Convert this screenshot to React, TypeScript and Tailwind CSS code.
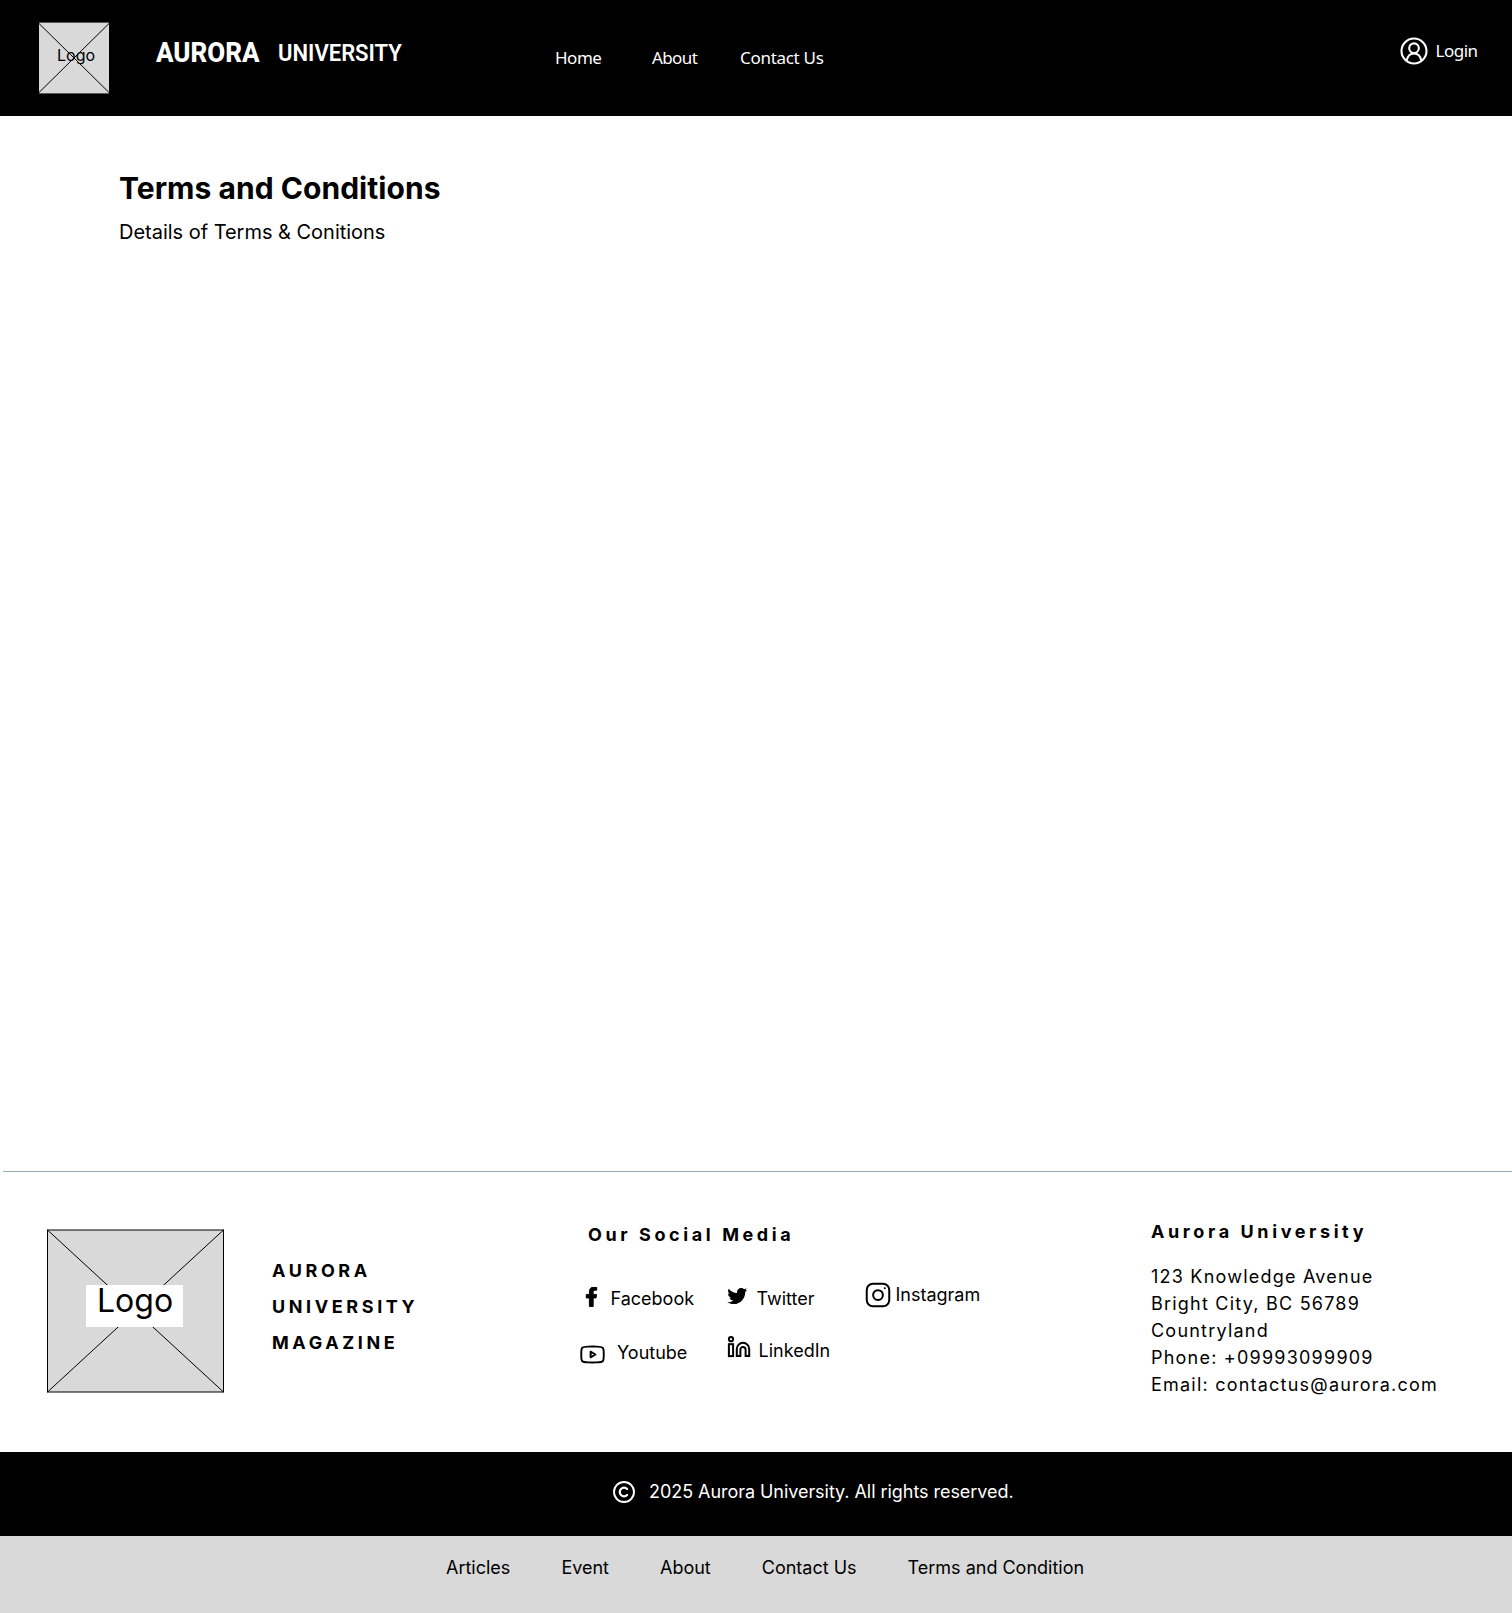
import type { ReactNode } from "react";
import { FaFacebookF, FaTwitter } from "react-icons/fa";

function UserIcon() {
  return (
    <svg className="h-7 w-7" viewBox="0 0 28 28" fill="none" stroke="currentColor" strokeWidth="2.1">
      <circle cx="14" cy="14" r="12.5" />
      <circle cx="14" cy="11.2" r="4.8" />
      <path d="M6.600 23.800c.9-4.600 3.900-7.300 7.400-7.300s6.500 2.700 7.400 7.300" />
    </svg>
  );
}

function InstagramIcon() {
  return (
    <svg className="-mt-px h-[30px] w-[30px]" viewBox="0 0 24 24" fill="none" stroke="currentColor" strokeWidth="1.6">
      <rect x="3" y="3" width="18" height="18" rx="5" />
      <circle cx="12" cy="12" r="3.9" />
      <path d="M17.5 6.51l.01-.011" strokeLinecap="round" />
    </svg>
  );
}

function YoutubeIcon() {
  return (
    <svg className="mt-[1.500px] h-[27px] w-[27px]" viewBox="0 0 24 24" fill="none" stroke="currentColor" strokeWidth="1.7" strokeLinejoin="round">
      <path d="M14.600 12l-4.300 2.500v-5z" />
      <path d="M2 12.708v-1.416c0-2.895 0-4.343.905-5.274.906-.932 2.332-.972 5.183-1.052C9.439 4.927 10.819 4.900 12 4.900s2.561.027 3.912.066c2.852.080 4.277.120 5.183 1.052.905.931.905 2.379.905 5.274v1.416c0 2.895 0 4.343-.905 5.274-.906.931-2.332.972-5.183 1.052-1.351.038-2.731.066-3.912.066s-2.561-.028-3.912-.066c-2.851-.080-4.277-.121-5.183-1.052C2 17.050 2 15.603 2 12.708z" />
    </svg>
  );
}

function LinkedInIcon() {
  return (
    <svg className="-mt-[2px] h-6 w-6" viewBox="0 0 24 24" fill="none" stroke="currentColor" strokeWidth="2">
      <circle cx="4" cy="4.200" r="2.100" />
      <rect x="1.900" y="9.200" width="4.200" height="11.900" />
      <path d="M9.800 21.100V14a6.200 6.200 0 0 1 12.400 0v7.100h-3.600v-6.600a2.600 2.600 0 0 0-5.200 0v6.600z" />
    </svg>
  );
}

function CopyrightIcon() {
  return (
    <svg className="h-6 w-6" viewBox="0 0 24 24" fill="none" stroke="currentColor" strokeWidth="1.900" strokeLinecap="round">
      <circle cx="12" cy="12" r="10" />
      <path d="M15.100 15a4.300 4.300 0 1 1 0-6" strokeWidth="2.200" />
    </svg>
  );
}

function HeaderLogo() {
  return (
    <div className="relative ml-[38px] mt-[22px] h-[72px] w-[72px]">
      <svg className="h-full w-full" viewBox="0 0 72 72" stroke="#000">
        <rect x="1" y="0" width="70" height="72" fill="#d9d9d9" stroke="none" />
        <path d="M1 0.500h70M1 71.500h70" strokeOpacity="0.6" />
        <path d="M0.500 1l71 70M71.500 1l-71 70" />
      </svg>
      <span className="absolute left-[19px] top-[23px] text-base leading-5 text-black">Logo</span>
    </div>
  );
}

function FooterLogo() {
  return (
    <div className="relative ml-[47px] mt-[57px] h-[164px] w-[177px]">
      <svg className="h-full w-full" viewBox="0 0 177 164" fill="#d9d9d9" stroke="#000">
        <rect x="0.500" y="1" width="176" height="162" />
        <path d="M0.500 1l176 162M176.500 1l-176 162" />
      </svg>
      <span className="absolute left-[39px] top-14 h-[42px] w-[97px] bg-white pl-[11px] text-[32px] leading-[39px]">
        <span className="relative -top-1">Logo</span>
      </span>
    </div>
  );
}

function Social({ icon, label, className }: { icon: ReactNode; label: string; className: string }) {
  return (
    <a href="#" className={`flex items-start ${className}`}>
      {icon}
      <span>{label}</span>
    </a>
  );
}

const footerLinks = ["Articles", "Event", "About", "Contact Us", "Terms and Condition"];

export default function App() {
  return (
    <div className="min-h-[1613px] w-[1512px] overflow-hidden whitespace-nowrap bg-white font-['Inter',sans-serif] text-lg leading-[27px] text-black">
      <header className="flex h-[116px] items-start bg-black text-white">
        <HeaderLogo />
        <div className="ml-[46px] flex w-[398px] font-['Roboto',sans-serif]">
          <span className="mt-9 w-[122px] origin-left scale-x-[0.928] text-[28px] font-extrabold leading-[33px]">AURORA</span>
          <span className="mt-[39px] origin-left scale-x-[0.918] text-2xl font-semibold leading-7">UNIVERSITY</span>
        </div>
        <nav className="mt-[46px] flex w-[846px] font-['Noto_Sans',sans-serif] text-[17px] leading-[23px]">
          <a href="#" className="w-[98px] pl-px tracking-[-0.5px]">Home</a>
          <a href="#" className="w-[88px] tracking-[-0.6px]">About</a>
          <a href="#" className="tracking-[-0.3px]">Contact Us</a>
        </nav>
        <a href="#" className="mt-[37px] flex items-start">
          <UserIcon />
          <span className="ml-[7.5px] mt-[2px] font-['Noto_Sans',sans-serif] text-[17px] leading-[23px] tracking-[-0.5px]">Login</span>
        </a>
      </header>

      <main className="h-[1055px] pl-[119px] pt-[54px]">
        <h1 className="text-[30px] font-bold leading-9 tracking-[0.040px]">Terms and Conditions</h1>
        <p className="mt-[14px] text-xl leading-6 tracking-[-0.020px]">Details of Terms &amp; Conitions</p>
      </main>

      <footer>
        <div className="ml-[3px] h-px bg-[#9aabb8]" />
        <div className="flex h-[280px] items-start">
          <FooterLogo />
          <div className="ml-12 mt-[85px] flex w-[307px] flex-col gap-[9px] font-bold tracking-[3.600px]">
            <span>AURORA</span>
            <span>UNIVERSITY</span>
            <span>MAGAZINE</span>
          </div>
          <section className="mt-[49px] w-[572px]">
            <h2 className="ml-[9px] font-bold tracking-[3.600px]">Our Social Media</h2>
            <div className="mt-[33px] flex items-start">
              <div className="w-[148px]">
                <Social className="ml-[3px] mt-1 gap-[18px]" icon={<FaFacebookF className="mt-[2px] -mr-[8.500px] h-[19.500px] w-[19px]" stroke="currentColor" strokeWidth="24" />} label="Facebook" />
                <Social className="mt-[27px] gap-[11px]" icon={<YoutubeIcon />} label="Youtube" />
              </div>
              <div className="w-[136px]">
                <Social className="mt-1 gap-[9.500px]" icon={<FaTwitter className="-ml-[0.500px] mt-[0.500px] h-5 w-[20.500px]" />} label="Twitter" />
                <Social className="mt-[25px] gap-[7.500px]" icon={<LinkedInIcon />} label="LinkedIn" />
              </div>
              <Social className="gap-[2.500px]" icon={<InstagramIcon />} label="Instagram" />
            </div>
          </section>
          <section className="mt-[46px]">
            <h2 className="font-bold tracking-[3.600px]">Aurora University</h2>
            <address className="mt-[18px] not-italic tracking-[1.220px]">
              <p>123 Knowledge Avenue</p>
              <p>Bright City, BC 56789</p>
              <p>Countryland</p>
              <p>Phone: +09993099909</p>
              <p>Email: contactus@aurora.com</p>
            </address>
          </section>
        </div>
        <div className="flex h-[84px] items-start bg-black pl-[612px] pt-[26px] text-white">
          <span className="mt-[2px]"><CopyrightIcon /></span>
          <span className="ml-[13px] tracking-[-0.050px]">2025 Aurora University. All rights reserved.</span>
        </div>
        <nav className="flex h-[77px] items-start gap-[51px] bg-[#d9d9d9] pl-[446px] pt-[18px]">
          {footerLinks.map((label) => (
            <a key={label} href="#">{label}</a>
          ))}
        </nav>
      </footer>
    </div>
  );
}
